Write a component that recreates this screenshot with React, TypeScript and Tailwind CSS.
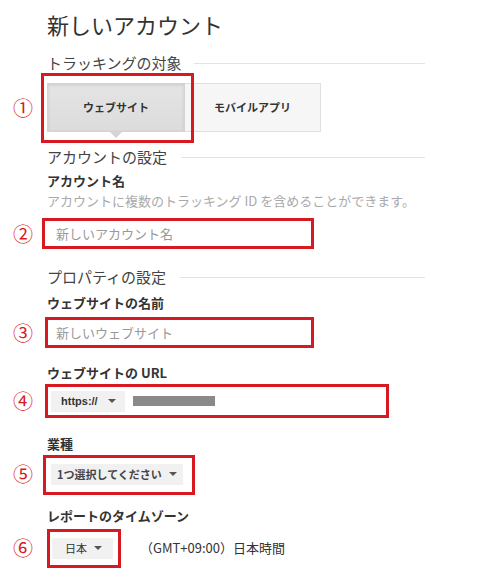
import React from 'react'

const RED = 'border-[#d71a21]'

function Num({ n, w }: { n: string; w: string }) {
    return (
        <span className={`${w} shrink-0 pl-[13px] text-[20px] leading-[24px] text-[#d71a21] font-['Noto_Sans_CJK_JP',sans-serif]`}>
            {n}
        </span>
    )
}

function Caret() {
    return <span className="inline-block w-0 h-0 border-x-[4px] border-x-transparent border-t-[4px] border-t-[#555]" />
}

function Heading({ children, gap }: { children: React.ReactNode; gap: string }) {
    return (
        <div className="flex items-center w-[378px] h-[20px]">
            <span className="text-[15px] leading-[20px] text-[#444]">{children}</span>
            <span className={`flex-1 h-px bg-[#e3e3e3] ${gap}`} />
        </div>
    )
}

function Label({ children }: { children: React.ReactNode }) {
    return <div className="h-[18px] text-[13px] leading-[18px] font-bold text-[#333]">{children}</div>
}

export default function App() {
    return (
        <div className="w-[503px] h-[584px] overflow-hidden bg-white text-[#333] font-['Noto_Sans_CJK_JP',sans-serif]">
            {/* Title */}
            <div className="pt-[10px] pl-[47px]">
                <div className="h-[28px] text-[22px] leading-[28px] text-[#333]">新しいアカウント</div>
                <div className="mt-[15px]">
                    <Heading gap="ml-[12px]">トラッキングの対象</Heading>
                </div>
            </div>

            {/* ① target */}
            <div className="flex items-center mt-[10px]">
                <Num n="①" w="w-[47px]" />
                <div className="flex">
                    <div className="relative">
                        <button className="w-[138px] h-[49px] border border-[#d4d4d4] bg-gradient-to-b from-[#e4e4e4] to-[#dcdcdc] shadow-[inset_0_1px_3px_rgba(0,0,0,0.12)] text-[11px] font-bold text-[#333]">
                            ウェブサイト
                        </button>
                        <span className="absolute left-[63px] top-[49px] w-0 h-0 border-x-[6px] border-x-transparent border-t-[6px] border-t-[#d4d4d4]" />
                        <span className={`absolute -left-[6px] -top-[10px] -right-[9px] -bottom-[11px] border-[3px] ${RED}`} />
                    </div>
                    <button className="w-[136px] h-[49px] border border-l-0 border-[#e0e0e0] bg-[#f6f6f6] text-[11px] font-bold text-[#333]">
                        モバイルアプリ
                    </button>
                </div>
            </div>

            {/* Account settings */}
            <div className="pl-[47px] mt-[15px]">
                <Heading gap="ml-[14px]">アカウントの設定</Heading>
                <div className="mt-[5px]">
                    <Label>アカウント名</Label>
                </div>
                <div className="mt-[2px] h-[18px] text-[13px] leading-[18px] text-[#aaa]">
                    アカウントに複数のトラッキング ID を含めることができます。
                </div>
            </div>

            {/* ② */}
            <div className="flex items-center mt-[8px]">
                <Num n="②" w="w-[42px]" />
                <div className={`w-[272px] h-[31px] border-[3px] ${RED} pl-[11px] flex items-center text-[13px] text-[#999]`}>
                    新しいアカウント名
                </div>
            </div>

            {/* Property settings */}
            <div className="pl-[47px] mt-[18px]">
                <Heading gap="ml-[14px]">プロパティの設定</Heading>
                <div className="mt-[7px]">
                    <Label>ウェブサイトの名前</Label>
                </div>
            </div>

            {/* ③ */}
            <div className="flex items-center mt-[5px]">
                <Num n="③" w="w-[45px]" />
                <div className={`w-[269px] h-[31px] border-[3px] ${RED} pl-[8px] flex items-center text-[13px] text-[#999]`}>
                    新しいウェブサイト
                </div>
            </div>

            <div className="pl-[47px] mt-[16px]">
                <Label>ウェブサイトの URL</Label>
            </div>

            {/* ④ */}
            <div className="flex items-center mt-[2px]">
                <Num n="④" w="w-[45px]" />
                <div className={`w-[344px] h-[34px] border-[3px] ${RED} pl-[3px] flex items-center`}>
                    <div className="w-[74px] h-[21px] bg-[#f1f1f1] flex items-center pl-[10px] gap-[10px] text-[11px] font-bold text-[#333] font-['Liberation_Sans',sans-serif]">
                        https://
                        <Caret />
                    </div>
                    <span className="ml-[8px] w-[82px] h-[10px] bg-[#8a8a8a]" />
                </div>
            </div>

            <div className="pl-[47px] mt-[17px]">
                <Label>業種</Label>
            </div>

            {/* ⑤ */}
            <div className="flex items-center mt-[9px]">
                <Num n="⑤" w="w-[51px]" />
                <div className="relative">
                    <div className="w-[132px] h-[21px] bg-[#f1f1f1] flex items-center pl-[6px] gap-[7px] text-[11px] font-bold text-[#444]">
                        1つ選択してください
                        <Caret />
                    </div>
                    <span className={`absolute -left-[8px] -top-[9px] -right-[12px] -bottom-[10px] border-[3px] ${RED}`} />
                </div>
            </div>

            <div className="pl-[47px] mt-[21px]">
                <Label>レポートのタイムゾーン</Label>
            </div>

            {/* ⑥ */}
            <div className="flex items-center mt-[11px]">
                <Num n="⑥" w="w-[52px]" />
                <div className="relative">
                    <div className="w-[61px] h-[21px] bg-[#f1f1f1] flex items-center pl-[13px] gap-[7px] text-[11px] text-[#333]">
                        日本
                        <Caret />
                    </div>
                    <span className={`absolute -left-[5px] -top-[9px] -right-[8px] -bottom-[9px] border-[3px] ${RED}`} />
                </div>
                <span className="ml-[27px] text-[13px] text-[#333]">（GMT+09:00）日本時間</span>
            </div>
        </div>
    )
}
